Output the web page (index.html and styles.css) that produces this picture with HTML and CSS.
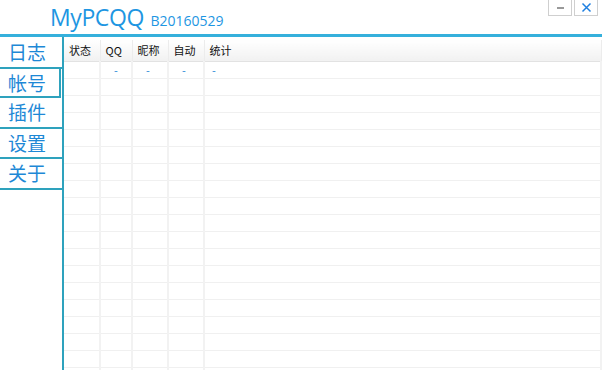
FILE: index.html
```html
<!DOCTYPE html>
<html lang="zh">
<head>
    <meta charset="UTF-8" />
    <title>MyPCQQ</title>
    <link rel="stylesheet" href="styles.css">
</head>
<body>
    <div class="window">
        <header class="titlebar">
            <h1>MyPCQQ <span class="version">B20160529</span></h1>
            <div class="controls">
                <button class="ctl" title="最小化">
                    <svg width="9" height="9" viewBox="0 0 9 9"><path d="M1 5h7" stroke="#555" stroke-width="1.2"/></svg>
                </button>
                <button class="ctl" title="关闭">
                    <svg width="11" height="11" viewBox="0 0 11 11"><path d="M1.5 1.5l8 8M9.5 1.5l-8 8" stroke="#1e7fe0" stroke-width="1.5"/></svg>
                </button>
            </div>
        </header>

        <div class="main">
            <nav class="sidebar">
                <a class="tab">日志</a>
                <a class="tab active">帐号</a>
                <a class="tab">插件</a>
                <a class="tab">设置</a>
                <a class="tab">关于</a>
            </nav>

            <div class="list">
                <table>
                    <thead>
                        <tr>
                            <th class="c1">状态</th>
                            <th class="c2">QQ</th>
                            <th class="c3">昵称</th>
                            <th class="c4">自动</th>
                            <th>统计</th>
                        </tr>
                    </thead>
                    <tbody id="rows">
                        <tr><td></td><td>-</td><td>-</td><td>-</td><td>-</td></tr>
                    </tbody>
                </table>
            </div>
        </div>
    </div>

    <script>
        const rows = document.getElementById("rows");
        for (let i = 0; i < 18; i++) {
            const tr = document.createElement("tr");
            for (let j = 0; j < 5; j++) {
                tr.appendChild(document.createElement("td"));
            }
            rows.appendChild(tr);
        }
    </script>
</body>
</html>
```

FILE: styles.css
```css
* {
    box-sizing: border-box;
    margin: 0;
    padding: 0;
}

body {
    font-family: "Noto Sans CJK SC", "Open Sans", sans-serif;
    background-color: #ffffff;
    width: 602px;
    height: 370px;
    overflow: hidden;
}

.titlebar {
    height: 37px;
    border-bottom: 3px solid #35b0dc;
    display: flex;
    justify-content: space-between;
}

.titlebar h1 {
    font-family: "Open Sans", sans-serif;
    font-weight: normal;
    font-size: 23px;
    color: #1e96e2;
    padding: 2px 0 0 50px;
    line-height: 30px;
    letter-spacing: -0.4px;
}

.version {
    font-size: 14px;
    margin-left: 1px;
    letter-spacing: 0;
}

.controls {
    display: flex;
    gap: 2px;
    padding-right: 4px;
}

.ctl {
    width: 24px;
    height: 16px;
    border: 1px solid #cfcfcf;
    border-top: none;
    background: #ffffff;
    display: flex;
    align-items: center;
    justify-content: center;
}

.main {
    display: flex;
    height: 333px;
}

.sidebar {
    width: 64px;
    border-right: 2px solid #2ea2bd;
    display: flex;
    flex-direction: column;
    padding-top: 1px;
}

.tab {
    height: 30.5px;
    border-bottom: 2px solid #2ea2bd;
    color: #1e88d6;
    font-size: 19px;
    line-height: 28px;
    padding-left: 8px;
}

.tab.active {
    width: 61px;
    border-right: 2px solid #2ea2bd;
    border-top: 1px solid #2ea2bd;
    margin-top: -1px;
}

.list {
    flex: 1;
    padding-top: 3px;
    overflow: hidden;
}

table {
    width: 100%;
    border-collapse: collapse;
    font-size: 11px;
}

th {
    height: 21px;
    text-align: left;
    font-weight: normal;
    color: #111;
    padding-left: 5px;
    background: linear-gradient(#ffffff, #f1f1f1);
    border-bottom: 1px solid #e2e2e2;
    border-right: 1px solid #ececec;
}

.c1 { width: 36px; }
.c2 { width: 32px; }
.c3 { width: 36px; }
.c4 { width: 36px; }

td {
    height: 17px;
    border-bottom: 1px solid #f0f0f0;
    border-right: 2px solid #f2f2f2;
    color: #1e88d6;
    padding-left: 13px;
    line-height: 12px;
}

td:last-child {
    padding-left: 7px;
}
```
